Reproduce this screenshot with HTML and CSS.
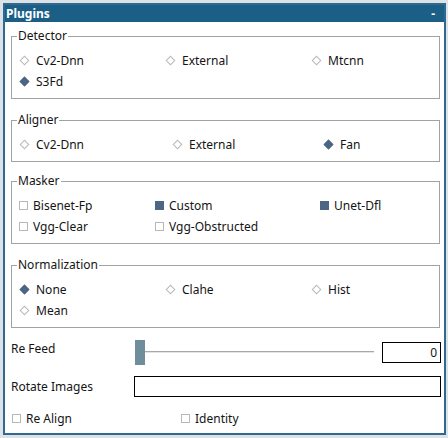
FILE: index.html
```html
<!DOCTYPE html>
<html>
<head>
<meta charset="utf-8">
<link rel="stylesheet" href="styles.css">
</head>
<body>
<div class="window">
  <div class="titlebar"><span class="title">Plugins</span><span class="min">-</span></div>
  <div class="content">
    <fieldset class="group">
      <legend>Detector</legend>
      <div class="opts cols-a">
        <label class="opt"><span class="radio"></span>Cv2-Dnn</label>
        <label class="opt"><span class="radio"></span>External</label>
        <label class="opt"><span class="radio"></span>Mtcnn</label>
        <label class="opt"><span class="radio on"></span>S3Fd</label>
      </div>
    </fieldset>
    <fieldset class="group g-aligner">
      <legend>Aligner</legend>
      <div class="opts cols-b">
        <label class="opt"><span class="radio"></span>Cv2-Dnn</label>
        <label class="opt"><span class="radio"></span>External</label>
        <label class="opt"><span class="radio on"></span>Fan</label>
      </div>
    </fieldset>
    <fieldset class="group g-masker">
      <legend>Masker</legend>
      <div class="opts cols-c">
        <label class="opt"><span class="check"></span>Bisenet-Fp</label>
        <label class="opt"><span class="check on"></span>Custom</label>
        <label class="opt"><span class="check on"></span>Unet-Dfl</label>
        <label class="opt"><span class="check"></span>Vgg-Clear</label>
        <label class="opt"><span class="check"></span>Vgg-Obstructed</label>
      </div>
    </fieldset>
    <fieldset class="group g-norm">
      <legend>Normalization</legend>
      <div class="opts cols-a">
        <label class="opt"><span class="radio on"></span>None</label>
        <label class="opt"><span class="radio"></span>Clahe</label>
        <label class="opt"><span class="radio"></span>Hist</label>
        <label class="opt"><span class="radio"></span>Mean</label>
      </div>
    </fieldset>
    <div class="row row-feed">
      <span class="lbl">Re Feed</span>
      <div class="slider"><span class="handle"></span><span class="track"></span></div>
      <div class="spin">0</div>
    </div>
    <div class="row row-rotate">
      <span class="lbl">Rotate Images</span>
      <div class="entry"></div>
    </div>
    <div class="row row-checks">
      <label class="opt"><span class="check"></span>Re Align</label>
      <label class="opt"><span class="check"></span>Identity</label>
    </div>
  </div>
</div>
</body>
</html>
```
FILE: styles.css
```css
* { box-sizing: border-box; }
html, body { margin: 0; }
body {
  background: #dde2e7;
  font-family: "Noto Sans", "Open Sans", sans-serif;
  font-size: 12px;
  color: #141414;
  padding: 3px 0 0 3px;
  height: 438px;
  overflow: hidden;
}
.window {
  width: 443px;
  height: 432px;
  border: 2px solid #2f6990;
  display: flex;
  flex-direction: column;
  background: #fff;
}
.titlebar {
  height: 17px;
  flex: none;
  background: #1b5f87;
  color: #fff;
  font-weight: bold;
  display: flex;
  align-items: center;
  justify-content: space-between;
  padding: 0 9px 0 1px;
  line-height: 17px;
}
.content {
  flex: 1;
  padding: 6px 3px 0 6px;
}
fieldset.group {
  margin: 0 1px 0 0;
  padding: 6px 0 6px 7px;
  border: 1px solid #a2a2a2;
  min-width: 0;
}
legend {
  padding: 0 1px;
  margin-left: -2px;
  line-height: 16px;
}
fieldset.g-aligner { margin-top: 13px; }
fieldset.g-masker { margin-top: 11px; }
fieldset.g-norm { margin-top: 13px; }
.opts {
  display: grid;
  grid-auto-rows: 21px;
}
.cols-a { grid-template-columns: 146px 146px 1fr; }
.cols-b { grid-template-columns: 153px 151px 1fr; }
.cols-c { grid-template-columns: 136px 165px 1fr; }
.opt {
  display: flex;
  align-items: center;
  white-space: nowrap;
}
.radio {
  width: 7px;
  height: 7px;
  border: 1px solid #b8b8b8;
  background: #fff;
  transform: rotate(45deg);
  margin: 0 8px 0 2px;
  flex: none;
}
.radio.on { background: #4b6584; border-color: #4b6584; }
.check {
  width: 9px;
  height: 9px;
  border: 1px solid #b8b8b8;
  background: #fff;
  margin-right: 5px;
  flex: none;
}
.check.on { background: #4e6683; border-color: #4e6683; }
.row { display: flex; align-items: center; }
.lbl { width: 123px; flex: none; }
.row-feed { margin-top: 11px; height: 26px; }
.row-feed .lbl { padding-bottom: 8px; }
.slider {
  flex: 1;
  display: flex;
  align-items: center;
  margin: 0 8px 0 1px;
  height: 25px;
}
.handle {
  width: 10px;
  height: 25px;
  background: #708d9b;
  flex: none;
}
.track {
  flex: 1;
  height: 2px;
  border-top: 1px solid #a8a8a8;
  background: #e4e4e4;
}
.spin {
  width: 59px;
  height: 21px;
  border: 1px solid #000;
  text-align: right;
  padding-right: 3px;
  line-height: 19px;
}
.row-rotate { margin-top: 11px; height: 21px; }
.entry {
  flex: 1;
  height: 21px;
  border: 1px solid #000;
}
.row-checks {
  margin-top: 11px;
  height: 20px;
  display: grid;
  grid-template-columns: 169px 1fr;
  align-items: center;
}
.row-checks .check { margin-left: 1px; }
```
